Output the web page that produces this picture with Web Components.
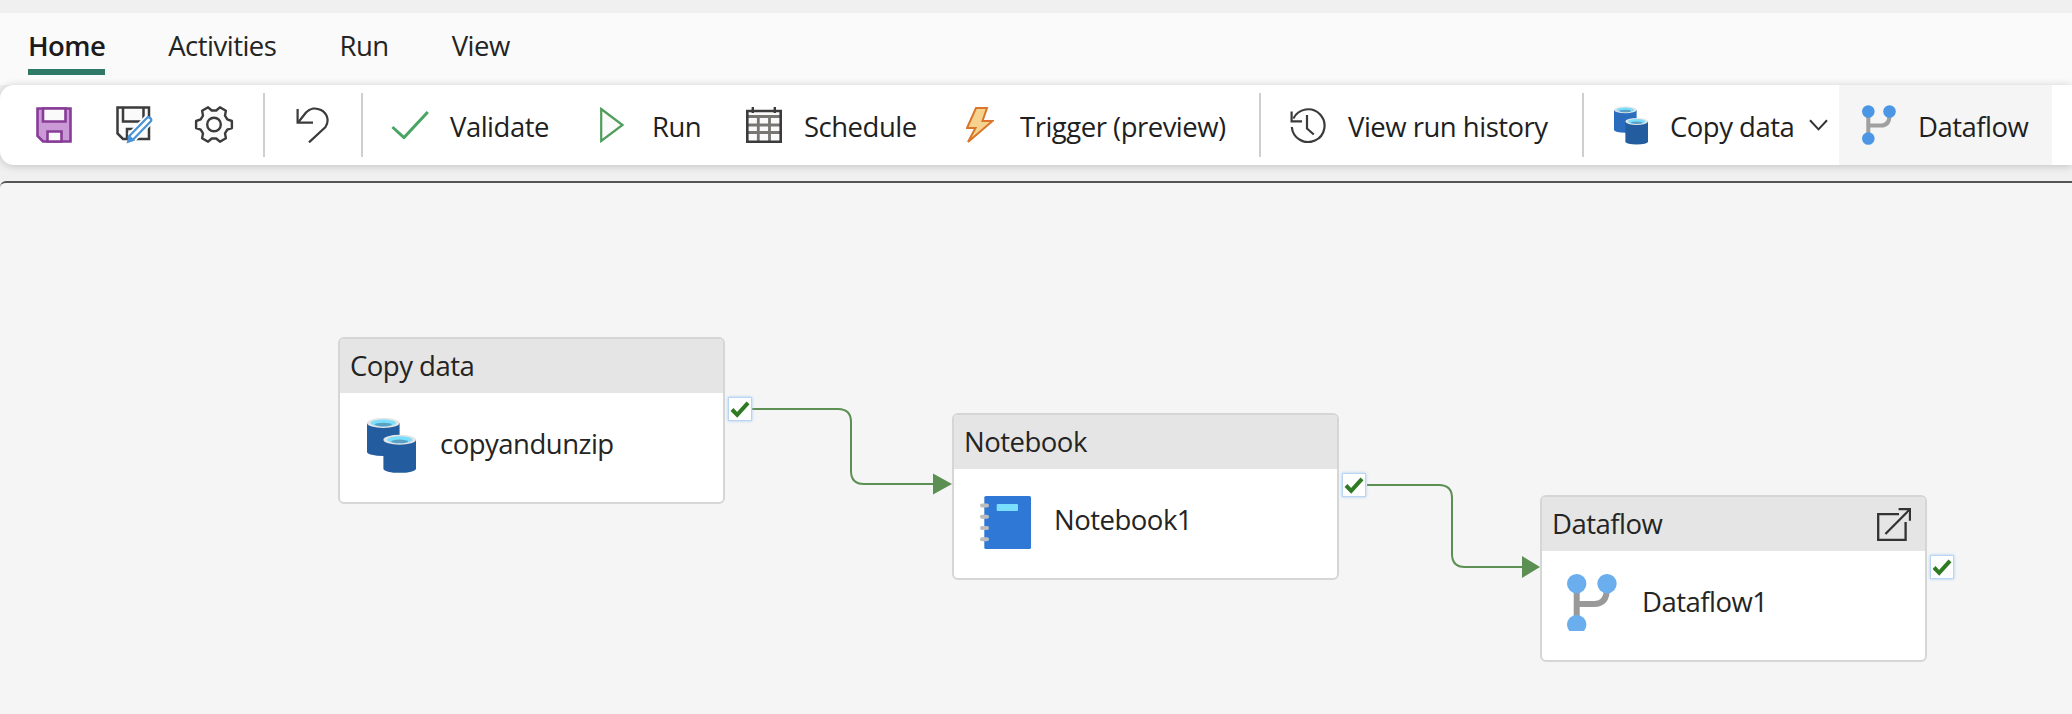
<!DOCTYPE html>
<html lang="en">
<head>
<meta charset="utf-8">
<title>Pipeline</title>
<style>
  html, body { margin: 0; height: 100%; background: #f0f0f0; }
  body { font-family: "Open Sans", "Noto Sans", sans-serif; color: #1f1f1f; overflow: hidden; }
</style>
</head>
<body>
<pipeline-app>
  <ribbon-tabs>
    <ribbon-tab active>Home</ribbon-tab>
    <ribbon-tab>Activities</ribbon-tab>
    <ribbon-tab>Run</ribbon-tab>
    <ribbon-tab>View</ribbon-tab>
  </ribbon-tabs>
  <ribbon-toolbar>
    <tool-button style="width:80px"><app-icon slot="icon" name="save"></app-icon></tool-button>
    <tool-button style="width:78px"><app-icon slot="icon" name="saveas"></app-icon></tool-button>
    <tool-button style="width:69px"><app-icon slot="icon" name="gear"></app-icon></tool-button>
    <tool-sep style="margin-right:31px"></tool-sep>
    <tool-button style="width:65px"><app-icon slot="icon" name="undo"></app-icon></tool-button>
    <tool-sep style="margin-right:28px"></tool-sep>
    <tool-button style="width:209px;--gap:21px"><app-icon slot="icon" name="check"></app-icon>Validate</tool-button>
    <tool-button style="width:146px;--gap:28px"><app-icon slot="icon" name="play"></app-icon>Run</tool-button>
    <tool-button style="width:220px;--gap:22px"><app-icon slot="icon" name="schedule"></app-icon>Schedule</tool-button>
    <tool-button style="width:293px;--gap:26px"><app-icon slot="icon" name="bolt"></app-icon>Trigger (preview)</tool-button>
    <tool-sep style="margin-right:29px"></tool-sep>
    <tool-button style="width:292px;--gap:22px"><app-icon slot="icon" name="history"></app-icon>View run history</tool-button>
    <tool-sep style="margin-right:30px"></tool-sep>
    <tool-button style="width:225px;--gap:22px"><app-icon slot="icon" name="copysmall" style="width:34px;height:39px"></app-icon>Copy data<app-icon slot="end" name="chevron"></app-icon></tool-button>
    <tool-button selected style="width:213px;--gap:22px"><app-icon slot="icon" name="flowsmall"></app-icon>Dataflow</tool-button>
  </ribbon-toolbar>
  <pipeline-canvas>
    <pipeline-node title="Copy data" style="left:338px;top:154px;--pad:27px;--icon-top:25px;--gap:24px">
      <app-icon slot="icon" name="copy"></app-icon>
      copyandunzip
    </pipeline-node>
    <pipeline-node title="Notebook" style="left:952px;top:230px;--pad:26px;--icon-top:27px;--gap:23px">
      <app-icon slot="icon" name="notebook"></app-icon>
      Notebook1
    </pipeline-node>
    <pipeline-node title="Dataflow" style="left:1540px;top:312px;--pad:25px;--icon-top:23px;--gap:25px">
      <app-icon slot="action" name="external"></app-icon>
      <app-icon slot="icon" name="flow"></app-icon>
      Dataflow1
    </pipeline-node>
  </pipeline-canvas>
</pipeline-app>

<script>
// gear outline, six teeth around (20, 18.5)
function gearPath() {
  const pts = [];
  for (let i = 0; i < 6; i++) {
    const a = i * 60;
    [[-21, 14.2], [-11, 18.2], [11, 18.2], [21, 14.2]].forEach(([d, r]) => {
      const t = (a + d) * Math.PI / 180;
      pts.push((20 + r * Math.cos(t)).toFixed(1) + ' ' + (18.5 + r * Math.sin(t)).toFixed(1));
    });
  }
  return 'M' + pts.join('L') + 'Z';
}

function cylinder(x, y, body) {
  return `<g transform="translate(${x} ${y})">
    <path d="M0 5V34A16.3 4 0 0 0 32.6 34V5Z" fill="${body}"/>
    <ellipse cx="16.3" cy="5" rx="16.3" ry="5" fill="#e4e4e4"/>
    <ellipse cx="16.3" cy="5" rx="12.6" ry="3.5" fill="#7adfff"/>
    <ellipse cx="16.3" cy="6.6" rx="8.5" ry="1.8" fill="#5a9fc4"/>
  </g>`;
}

const ICONS = {
  save: [36, 36, `<path d="M1.5 1.5H34.5V34.5H7L1.5 29Z" fill="#c99ad6" stroke="#883c98" stroke-width="2.6"/>
    <path d="M7 1.5V14.5H29.5V1.5Z" fill="#fafafa" stroke="#883c98" stroke-width="2.6"/>
    <path d="M11.5 34.5V24.5H25.5V34.5Z" fill="#fafafa" stroke="#883c98" stroke-width="2.6"/>`],
  saveas: [38, 38, `<path d="M1.5 1.5H33V33H7L1.5 27.5Z" fill="#fafafa" stroke="#3b3b3b" stroke-width="2.5"/>
    <path d="M7 1.5V15.5H27.5V1.5" fill="none" stroke="#3b3b3b" stroke-width="2.5"/>
    <path d="M11 32V23H19" fill="none" stroke="#3b3b3b" stroke-width="2.5"/>
    <path d="M15.5 31.5L33 13.5" stroke="#fff" stroke-width="11"/>
    <path d="M15.5 31.5L32.5 14" stroke="#4a94d6" stroke-width="7.5" stroke-linecap="round"/>
    <path d="M15.5 31.5L32.5 14" stroke="#fff" stroke-width="3" stroke-linecap="round"/>
    <path d="M10.5 37.5L13 28.5L19 34.5Z" fill="#4a94d6"/>`],
  gear: [40, 38, `<path d="${gearPath()}" fill="#fafafa" stroke="#3b3b3b" stroke-width="2.4" stroke-linejoin="round"/>
    <circle cx="20" cy="18.5" r="6.8" fill="#fff" stroke="#3b3b3b" stroke-width="2.4"/>`],
  undo: [33, 36, `<path d="M1.6 2V15.6H17" fill="none" stroke="#3b3b3b" stroke-width="2.2"/>
    <path d="M2.5 15L10 5.5C14 1 20 .5 25 3C31.5 6.5 33.5 14 29.5 20L13 35.4" fill="none" stroke="#3b3b3b" stroke-width="2.2"/>`],
  check: [38, 28, `<path d="M1.4 16L13 26.6L36.8 1" fill="none" stroke="#4aa564" stroke-width="3"/>`],
  play: [24, 36, `<path d="M1.2 2L22.5 18L1.2 34Z" fill="#fafafa" stroke="#4f9d5a" stroke-width="2.2"/>`],
  schedule: [36, 36, `<path d="M1.3 4H34.7V34.7H1.3Z" fill="#fafafa"/>
    <path d="M1 9.5H35M1 18H35M1 25.5H35M12.3 9V35M23.5 9V35" stroke="#787672" stroke-width="2.8"/>
    <path d="M1.3 4H34.7V34.7H1.3Z" fill="none" stroke="#3b3b3b" stroke-width="2.6"/>
    <path d="M6.8 0V6M28.8 0V6" stroke="#3b3b3b" stroke-width="2.4"/>`],
  bolt: [28, 36, `<path d="M10 1H21L16.5 14H26.5L2 35L9.5 21H1Z" fill="#f6d28e" stroke="#d9762b" stroke-width="2"/>`],
  history: [36, 36, `<path d="M3.4 11.5A16.4 16.4 0 1 1 1.8 20" fill="none" stroke="#3b3b3b" stroke-width="2.2"/>
    <path d="M1.6 4.5V14.4H12" fill="none" stroke="#3b3b3b" stroke-width="2.2"/>
    <path d="M17 8V21.5L23.8 27.5" fill="none" stroke="#3b3b3b" stroke-width="2.2"/>`],
  copy: [49, 55, cylinder(0, 0, '#235c9f') + cylinder(16.4, 16.8, '#235c9f')],
  copysmall: [49, 55, cylinder(0, 0, '#2a6dbf') + cylinder(16.4, 16.8, '#235c9f')],
  chevron: [19, 12, `<path d="M1 1.2L9.5 10.4L18 1.2" fill="none" stroke="#333" stroke-width="2"/>`],
  flowsmall: [34, 40, `<path d="M6.3 6V34M6.3 20.6H19Q27.5 20.6 27.5 10" fill="none" stroke="#a0a0a0" stroke-width="4"/>
    <circle cx="6.3" cy="6.5" r="6.3" fill="#4c96e6"/><circle cx="27.5" cy="6.5" r="6.3" fill="#4c96e6"/><circle cx="6.3" cy="33.5" r="6.3" fill="#4c96e6"/>`],
  flow: [50, 57, `<path d="M9.7 10V50M9.7 30H27Q40 30 40 14" fill="none" stroke="#999" stroke-width="6"/>
    <circle cx="9.7" cy="9.7" r="9.7" fill="#6aaeee"/><circle cx="40" cy="9.7" r="9.7" fill="#6aaeee"/><circle cx="9.7" cy="50.6" r="9.7" fill="#6aaeee"/>`],
  notebook: [51, 53, `<rect x="4.3" width="46.7" height="53" rx="1.6" fill="#2f78d6"/>
    <rect x="16.7" y="8" width="21.3" height="7" rx="1" fill="#7adfff"/>
    <g fill="#bdbdbd"><rect y="7.6" width="9" height="4" rx="2"/><rect y="18.8" width="9" height="4" rx="2"/><rect y="30" width="9" height="4" rx="2"/><rect y="41.2" width="9" height="4" rx="2"/></g>`],
  external: [34, 33, `<path d="M22 6.2H1.2V32H28.6V14" fill="none" stroke="#333" stroke-width="2.3"/>
    <path d="M8.4 26L33 1.2M21.6 1.2H33V12.8" fill="none" stroke="#333" stroke-width="2.3"/>`]
};

class AppIcon extends HTMLElement {
  constructor() {
    super();
    this.attachShadow({ mode: 'open' });
  }
  connectedCallback() {
    const [w, h, body] = ICONS[this.getAttribute('name')];
    this.shadowRoot.innerHTML = `
      <style>
        :host { display: block; flex: none; width: ${w}px; height: ${h}px; }
        svg { display: block; width: 100%; height: 100%; overflow: hidden; }
      </style>
      <svg viewBox="0 0 ${w} ${h}" xmlns="http://www.w3.org/2000/svg">${body}</svg>`;
  }
}

class PipelineApp extends HTMLElement {
  constructor() {
    super();
    this.attachShadow({ mode: 'open' }).innerHTML = `
      <style>
        :host { display: flex; flex-direction: column; height: 714px; padding-top: 13px; box-sizing: border-box; }
      </style>
      <slot></slot>`;
  }
}

class RibbonTabs extends HTMLElement {
  constructor() {
    super();
    this.attachShadow({ mode: 'open' }).innerHTML = `
      <style>
        :host { display: flex; gap: 63px; height: 72px; padding-left: 28px; background: #fafafa; box-sizing: border-box; }
      </style>
      <slot></slot>`;
  }
}

class RibbonTab extends HTMLElement {
  constructor() {
    super();
    this.attachShadow({ mode: 'open' }).innerHTML = `
      <style>
        :host { display: block; height: 62px; padding-top: 15px; box-sizing: border-box; font-size: 27.5px; line-height: 36px; letter-spacing: -.5px; border-bottom: 6px solid transparent; color: #242424; }
        :host([active]) { font-weight: 600; letter-spacing: -.6px; border-bottom-color: #2f7865; color: #1b1b1b; }
      </style>
      <slot></slot>`;
  }
}

class RibbonToolbar extends HTMLElement {
  constructor() {
    super();
    this.attachShadow({ mode: 'open' }).innerHTML = `
      <style>
        :host { display: flex; align-items: center; height: 80px; padding-left: 36px; background: #fff; border-radius: 14px 0 0 14px; box-shadow: 0 1px 9px rgba(0,0,0,.2); position: relative; z-index: 1; }
      </style>
      <slot></slot>`;
  }
}

class ToolButton extends HTMLElement {
  constructor() {
    super();
    this.attachShadow({ mode: 'open' }).innerHTML = `
      <style>
        :host { display: flex; flex: none; align-items: center; height: 100%; box-sizing: border-box; gap: var(--gap, 0); font-size: 27.5px; letter-spacing: -.5px; color: #1f1f1f; white-space: nowrap; }
        :host([selected]) { background: #f5f5f5; padding-left: 23px; }
        slot:not([name]) { display: block; padding-top: 2px; }
        .end { margin-left: -7px; display: block; }
      </style>
      <slot name="icon"></slot><slot></slot><div class="end"><slot name="end"></slot></div>`;
  }
}

class ToolSep extends HTMLElement {
  constructor() {
    super();
    this.attachShadow({ mode: 'open' }).innerHTML = `
      <style>
        :host { display: block; flex: none; width: 2px; height: 64px; background: #cfcfcf; }
      </style>`;
  }
}

class PipelineCanvas extends HTMLElement {
  constructor() {
    super();
    this.attachShadow({ mode: 'open' }).innerHTML = `
      <style>
        :host { display: block; position: relative; flex: 1; margin-top: 16px; background: #f5f5f5; border-top: 2px solid #555; border-top-left-radius: 6px; overflow: hidden; }
        svg { position: absolute; inset: 0; width: 100%; height: 100%; }
        path { fill: none; stroke: #5c8f52; stroke-width: 2; }
        polygon { fill: #5c8f52; }
      </style>
      <svg xmlns="http://www.w3.org/2000/svg">
        <path d="M752 226H838Q851 226 851 239V288Q851 301 864 301H934"/>
        <polygon points="933,290.5 952,301 933,311.5"/>
        <path d="M1367 302H1439Q1452 302 1452 315V371Q1452 384 1465 384H1523"/>
        <polygon points="1522,373 1540,384 1522,395"/>
      </svg>
      <slot></slot>`;
  }
}

class RunCheck extends HTMLElement {
  constructor() {
    super();
    this.attachShadow({ mode: 'open' }).innerHTML = `
      <style>
        :host { display: block; width: 24px; height: 24px; box-sizing: border-box; background: #fff; border: 1px solid #b8d5f2; box-shadow: 0 0 3px #a9cdf2; }
        svg { display: block; }
      </style>
      <svg width="22" height="22" viewBox="0 0 22 22" xmlns="http://www.w3.org/2000/svg"><path d="M3 11.5L8.2 16.8L19 4.8" fill="none" stroke="#2f7a22" stroke-width="4"/></svg>`;
  }
}

class PipelineNode extends HTMLElement {
  constructor() {
    super();
    this.attachShadow({ mode: 'open' }).innerHTML = `
      <style>
        :host { position: absolute; display: flex; flex-direction: column; width: 387px; height: 167px; box-sizing: border-box; background: #fff; border: 2px solid #d6d6d6; border-radius: 6px; }
        header { display: flex; align-items: center; justify-content: space-between; flex: none; height: 54px; padding: 0 14px 0 10px; background: #e5e5e5; border-radius: 4px 4px 0 0; font-size: 27.5px; letter-spacing: -.5px; color: #242424; }
        .title { padding-bottom: 2px; }
        .body { display: flex; gap: var(--gap); padding-left: var(--pad); font-size: 27.5px; letter-spacing: -.5px; color: #242424; }
        .icon { display: block; margin-top: var(--icon-top); }
        .name { display: block; margin-top: 33px; line-height: 36px; }
        run-check { position: absolute; left: calc(100% + 5px); top: 58px; }
      </style>
      <header><span class="title"></span><slot name="action"></slot></header>
      <div class="body">
        <div class="icon"><slot name="icon"></slot></div>
        <div class="name"><slot></slot></div>
      </div>
      <run-check></run-check>`;
  }
  connectedCallback() {
    this.shadowRoot.querySelector('.title').textContent = this.getAttribute('title');
  }
}

customElements.define('app-icon', AppIcon);
customElements.define('pipeline-app', PipelineApp);
customElements.define('ribbon-tabs', RibbonTabs);
customElements.define('ribbon-tab', RibbonTab);
customElements.define('ribbon-toolbar', RibbonToolbar);
customElements.define('tool-button', ToolButton);
customElements.define('tool-sep', ToolSep);
customElements.define('pipeline-canvas', PipelineCanvas);
customElements.define('run-check', RunCheck);
customElements.define('pipeline-node', PipelineNode);
</script>
</body>
</html>
